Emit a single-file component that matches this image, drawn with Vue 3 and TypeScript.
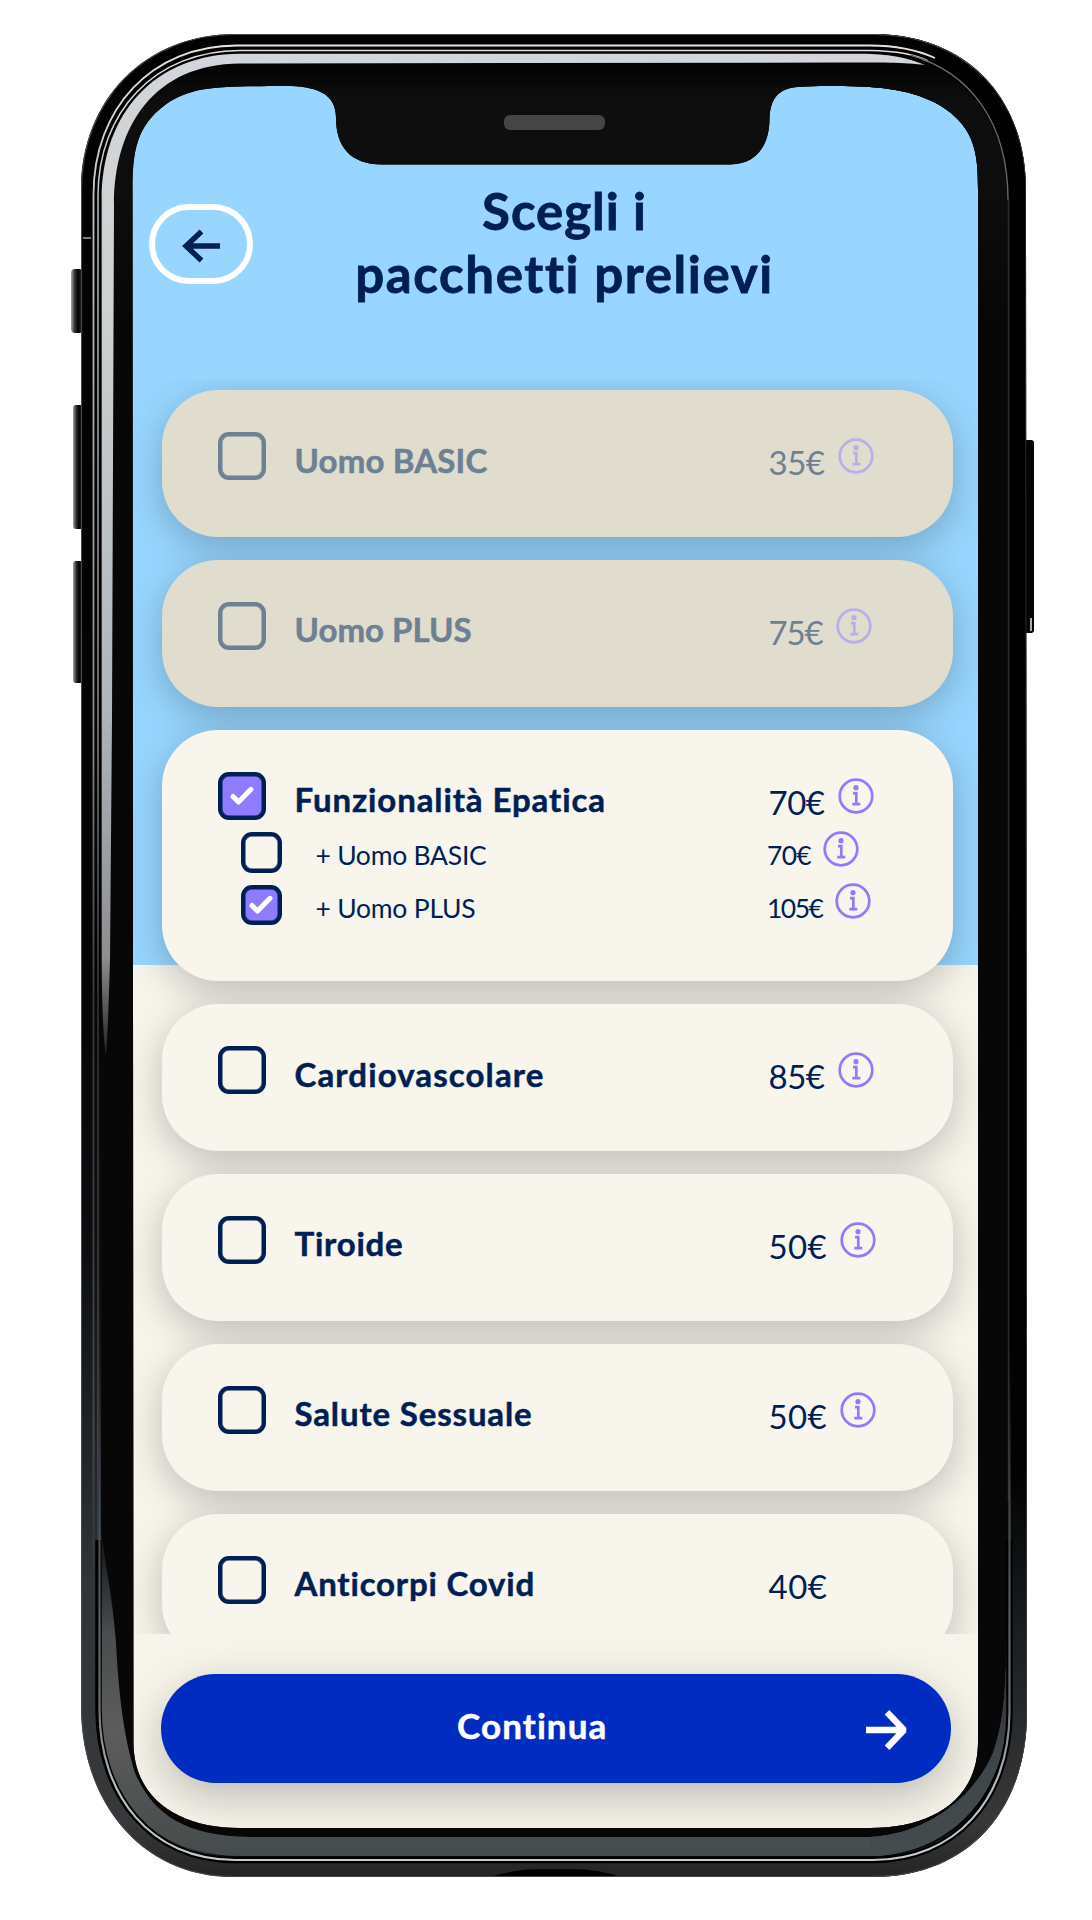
<script setup lang="ts">
import type { Directive } from 'vue'

interface Extra {
  label: string
  labelWidth: number
  price: string
  priceWidth: number
  checked: boolean
}

interface Pack extends Extra {
  disabled?: boolean
  info: boolean
  extras?: Extra[]
}

const packs: Pack[] = [
  { label: 'Uomo BASIC', labelWidth: 193, price: '35€', priceWidth: 56, checked: false, disabled: true, info: true },
  { label: 'Uomo PLUS', labelWidth: 177, price: '75€', priceWidth: 54, checked: false, disabled: true, info: true },
  {
    label: 'Funzionalità Epatica', labelWidth: 312, price: '70€', priceWidth: 56, checked: true, info: true,
    extras: [
      { label: '+ Uomo BASIC', labelWidth: 171, price: '70€', priceWidth: 44, checked: false },
      { label: '+ Uomo PLUS', labelWidth: 160, price: '105€', priceWidth: 55.5, checked: true },
    ],
  },
  { label: 'Cardiovascolare', labelWidth: 250, price: '85€', priceWidth: 56, checked: false, info: true },
  { label: 'Tiroide', labelWidth: 109, price: '50€', priceWidth: 58.5, checked: false, info: true },
  { label: 'Salute Sessuale', labelWidth: 238, price: '50€', priceWidth: 58.5, checked: false, info: true },
  { label: 'Anticorpi Covid', labelWidth: 241, price: '40€', priceWidth: 59, checked: false, info: false },
]

/* Spreads the letters of a text so that it takes the given width. */
const vFit: Directive<HTMLElement, number> = {
  mounted(el, { value }) {
    const count = (el.textContent ?? '').trim().length
    const natural = el.getBoundingClientRect().width
    el.style.letterSpacing = `${(value - natural) / count}px`
  },
}
</script>

<template>
  <div class="stage">
    <main class="screen">
      <header class="header">
        <button class="back" aria-label="Indietro">
          <svg width="40" height="36" viewBox="0 0 40 36" fill="none" stroke="#001f55" stroke-width="5.4">
            <path d="M39 18H5M20.5 3.500 5 18l15.500 14.500" stroke-linejoin="miter" />
          </svg>
        </button>
        <h1 class="title">
          <span v-fit="165">Scegli i</span>
          <span v-fit="417">pacchetti prelievi</span>
        </h1>
      </header>

      <section class="list">
        <article
          v-for="pack in packs"
          :key="pack.label"
          class="card"
          :class="{ disabled: pack.disabled, expanded: pack.extras }"
        >
          <div class="row">
            <span class="box" :class="{ checked: pack.checked }">
              <svg v-if="pack.checked" class="tick" width="24" height="19" viewBox="0 0 24 19">
                <path d="M3 10.500 8.500 16 21 3.300" />
              </svg>
            </span>
            <div class="name"><span v-fit="pack.labelWidth">{{ pack.label }}</span></div>
            <div class="price"><span v-fit="pack.priceWidth">{{ pack.price }}</span></div>
            <svg v-if="pack.info" class="info" width="36" height="36" viewBox="0 0 36 36">
              <circle cx="18" cy="18" r="16.300" />
              <circle class="dot" cx="18" cy="9.700" r="2.600" />
              <path d="M15 15.200h3.300v10.500M14.300 26.200h8" />
            </svg>
          </div>
          <div v-for="extra in pack.extras" :key="extra.label" class="row extra">
            <span class="box" :class="{ checked: extra.checked }">
              <svg v-if="extra.checked" class="tick" width="24" height="19" viewBox="0 0 24 19">
                <path d="M3 10.500 8.500 16 21 3.300" />
              </svg>
            </span>
            <div class="name"><span v-fit="extra.labelWidth">{{ extra.label }}</span></div>
            <div class="price"><span v-fit="extra.priceWidth">{{ extra.price }}</span></div>
            <svg class="info" width="36" height="36" viewBox="0 0 36 36">
              <circle cx="18" cy="18" r="16.300" />
              <circle class="dot" cx="18" cy="9.700" r="2.600" />
              <path d="M15 15.200h3.300v10.500M14.300 26.200h8" />
            </svg>
          </div>
        </article>
      </section>

      <footer class="footer">
        <button class="continue">
          <span class="cta"><span v-fit="151">Continua</span></span>
          <svg width="42" height="42" viewBox="0 0 42 42" fill="none" stroke="#fff" stroke-width="6.4">
            <path d="M0 21h37M21 3.300 38 21 21 38.700" stroke-linejoin="bevel" />
          </svg>
        </button>
      </footer>
    </main>

    <svg class="frame" width="1092" height="1920" viewBox="0 0 1092 1920" aria-hidden="true">
      <defs>
        <linearGradient id="body" x1="0" y1="34" x2="0" y2="1877" gradientUnits="userSpaceOnUse">
          <stop offset="0" stop-color="#020202" />
          <stop offset=".5" stop-color="#040405" />
          <stop offset=".66" stop-color="#0c0d0e" />
          <stop offset=".84" stop-color="#303438" />
          <stop offset=".97" stop-color="#36383a" />
          <stop offset="1" stop-color="#242424" />
        </linearGradient>
        <linearGradient id="rightBody" x1="0" y1="34" x2="0" y2="1877" gradientUnits="userSpaceOnUse">
          <stop offset="0" stop-color="#000" />
          <stop offset=".78" stop-color="#020202" />
          <stop offset=".87" stop-color="#1c1e20" />
          <stop offset=".97" stop-color="#36383a" />
          <stop offset="1" stop-color="#242424" />
        </linearGradient>
        <linearGradient id="silver" x1="0" y1="54" x2="0" y2="1056" gradientUnits="userSpaceOnUse">
          <stop offset="0" stop-color="#d2d6da" />
          <stop offset=".25" stop-color="#ced1d1" />
          <stop offset=".65" stop-color="#b0b5ba" />
          <stop offset=".9" stop-color="#8d8f91" />
          <stop offset="1" stop-color="#222" />
        </linearGradient>
        <linearGradient id="line" x1="0" y1="44" x2="0" y2="1600" gradientUnits="userSpaceOnUse">
          <stop offset="0" stop-color="#e6e2e2" />
          <stop offset=".12" stop-color="#bdbdbd" />
          <stop offset=".45" stop-color="#8a8583" />
          <stop offset=".62" stop-color="#34373b" />
          <stop offset=".9" stop-color="#44494e" />
          <stop offset="1" stop-color="#44494e" stop-opacity="0" />
        </linearGradient>
        <linearGradient id="lower" x1="0" y1="1540" x2="0" y2="1858" gradientUnits="userSpaceOnUse">
          <stop offset="0" stop-color="#15181a" />
          <stop offset=".3" stop-color="#4b4d4e" />
          <stop offset=".6" stop-color="#5c5c5b" />
          <stop offset="1" stop-color="#454b4c" />
        </linearGradient>
        <linearGradient id="lowerRight" x1="0" y1="1600" x2="0" y2="1858" gradientUnits="userSpaceOnUse">
          <stop offset="0" stop-color="#1c2024" />
          <stop offset=".6" stop-color="#3e454a" />
          <stop offset="1" stop-color="#454c4e" />
        </linearGradient>
        <linearGradient id="rim" x1="0" y1="1350" x2="0" y2="1860" gradientUnits="userSpaceOnUse">
          <stop offset="0" stop-color="#34393e" stop-opacity="0" />
          <stop offset=".3" stop-color="#40464b" />
          <stop offset=".7" stop-color="#6c7276" />
          <stop offset=".85" stop-color="#b5b8ba" />
          <stop offset="1" stop-color="#c5cacb" />
        </linearGradient>
        <linearGradient id="bezel" x1="0" y1="64" x2="0" y2="320" gradientUnits="userSpaceOnUse">
          <stop offset="0" stop-color="#030303" />
          <stop offset=".15" stop-color="#0e0e0e" />
          <stop offset=".5" stop-color="#0d0d0d" />
          <stop offset="1" stop-color="#070707" />
        </linearGradient>
        <linearGradient id="key" x1="0" y1="0" x2="1" y2="0">
          <stop offset="0" stop-color="#a7aaad" />
          <stop offset=".3" stop-color="#34373a" />
          <stop offset=".6" stop-color="#000" />
          <stop offset="1" stop-color="#34373a" />
        </linearGradient>
        <clipPath id="glass">
          <path clip-rule="evenodd" d="M81 190C81 100 145 34 235 34H873C965 34 1026 96 1026 190L1027 1713C1027 1808 970 1877 873 1877H233C140 1877 81 1800 81 1707ZM132.500 190C132.500 150 137 126 165 105C192 85 222 86.500 285 86C316 86 336 93 336 118C336 146 350 164.500 382 164.500H730C756 164.500 769 146 769.500 120C770 97 779 87 804 86.500C870 85 908 87 941 106C976 128 978 155 978 190V1742C978 1800 932 1828 870 1828H240C180 1828 133.500 1800 133.500 1742Z" />
        </clipPath>
      </defs>

      <g>
        <rect x="71" y="269" width="12" height="64" rx="4" fill="url(#key)" />
        <rect x="73" y="405" width="10" height="124" rx="3" fill="url(#key)" />
        <rect x="73" y="561" width="10" height="122" rx="3" fill="url(#key)" />
        <rect x="1024" y="440" width="10" height="193" rx="3" fill="#050505" />
        <path d="M1031 618v13" stroke="#aaa" stroke-width="2" />
      </g>

      <g clip-path="url(#glass)">
        <rect x="60" y="20" width="980" height="1870" fill="url(#body)" />
        <rect x="800" y="20" width="240" height="1870" fill="url(#rightBody)" />
        <path d="M101 1000V200C101 113 155 53 240 53H870C950 53 1008 110 1008 200V1713C1008 1800 950 1857 870 1857H240C155 1857 101 1790 101 1707Z" fill="url(#bezel)" />

        <g fill="none" stroke="url(#line)">
          <path d="M93.500 1600V195C93.500 108 152 45.500 237 45.500H870C895 45.500 915 49 935 58" stroke-width="1.800" />
          <path d="M98 1600V196C98 112 155 50.500 240 50.500H870C895 51 915 54 928 61" stroke-width="1.500" />
        </g>
        <path d="M101.700 960V200C101.700 113 155 54 240 53.700H860C890 54 905 57 925 65C905 62.500 880 62.500 840 62.500L240 63.500C155 64 114 125 114 205L112 720L110 960Q108 1030 106 1056Q102 1030 101.700 960Z" fill="url(#silver)" />
        <path d="M910 55C970 72 1008 122 1008 200" fill="none" stroke="#66666a" stroke-width="1.400" />
        <path d="M1008.500 200V1500" fill="none" stroke="#2c2d31" stroke-width="1.600" />

        <path d="M101 1530C106 1570 115 1610 117 1660C121 1720 128 1750 135 1773C152 1812 182 1836 250 1837H870C930 1834 975 1795 993 1753C1003 1725 1005 1700 1007 1640V1720C1001 1806 940 1856 870 1856H240C145 1856 101 1790 101 1707Z" fill="url(#lower)" />
        <path d="M870 1837C930 1834 975 1795 993 1753C1003 1725 1005 1700 1007 1640V1720C1001 1806 940 1856 870 1856Z" fill="url(#lowerRight)" />
        <path d="M98.500 1540V1710C99 1795 150 1860 235 1860H873C955 1860 1009 1800 1009.500 1713V1540" fill="none" stroke="#000" stroke-width="6.500" />
        <path d="M99.500 1350V1710C99.500 1795 150 1860 235 1860H873C955 1860 1009 1800 1009.500 1713V1350" fill="none" stroke="url(#rim)" stroke-width="2.200" />
        <path d="M490 1877Q515 1869 540 1869H570Q600 1869 620 1877Z" fill="#000" />
        <path d="M83 238h8" stroke="#a5a5a5" stroke-width="1.500" />
        <path d="M81.500 1707V190C81.500 100 145 34.500 235 34.500H873C965 34.500 1026 96 1026 190L1027 1713C1027 1808 970 1876.500 873 1876.500H233C140 1876.500 81.500 1800 81.500 1707Z" fill="none" stroke="#45474a" stroke-width="1.200" />
      </g>
      <rect x="504" y="115" width="101" height="15" rx="6" fill="#454544" />
    </svg>
  </div>
</template>

<style>
body {
  margin: 0;
  background: #fff;
}
</style>

<style scoped>
.stage {
  position: relative;
  box-sizing: border-box;
  width: 1092px;
  height: 1920px;
  padding: 86px 114px 0 132px;
  overflow: hidden;
  background: #fff;
  color: #001f55;
  font-family: Lato, 'Open Sans', sans-serif;
}

.frame {
  position: absolute;
  inset: 0;
  pointer-events: none;
}

.screen {
  display: flex;
  flex-direction: column;
  width: 846px;
  height: 1742px;
  background: linear-gradient(#98d6ff 0 879px, #f7f4eb 879px);
}

.header {
  display: flex;
  flex: none;
  align-items: flex-start;
  box-sizing: border-box;
  height: 293px;
  padding: 93px 0 0 17px;
}

.back {
  display: flex;
  flex: none;
  align-items: center;
  justify-content: center;
  box-sizing: border-box;
  width: 104px;
  height: 80px;
  margin-top: 25px;
  padding: 4px 0 0;
  border: 6px solid #fff;
  border-radius: 40px;
  background: none;
}

.title {
  display: flex;
  flex-direction: column;
  align-items: center;
  width: 623px;
  margin: 0;
  font-size: 51px;
  font-weight: 700;
  line-height: 63px;
  white-space: nowrap;
  -webkit-text-stroke: 0.8px currentColor;
}

.list {
  display: flex;
  flex: none;
  flex-direction: column;
  gap: 23px;
  box-sizing: border-box;
  height: 1255px;
  padding: 11px 25px 0 30px;
  overflow: hidden;
}

.card {
  flex: none;
  box-sizing: border-box;
  height: 146.800px;
  padding: 42px 56px 0;
  border-radius: 56px;
  background: #f8f5ec;
  box-shadow: 0 10px 38px rgba(0, 0, 0, 0.23);
}

.card.expanded {
  height: 251.600px;
}

.card.disabled {
  background: #e1ddce;
  color: #6d8094;
}

.row {
  display: flex;
  align-items: flex-start;
  height: 60.500px;
  white-space: nowrap;
}

.box {
  display: flex;
  flex: none;
  align-items: center;
  justify-content: center;
  box-sizing: border-box;
  width: 48px;
  height: 48px;
  border: 4.500px solid #001f55;
  border-width: 4.500px;
  border-radius: 11px;
  box-shadow: inset 0 0 0 0.500px #001f55;
}

.disabled .box {
  border-color: #6d8094;
  box-shadow: inset 0 0 0 0.500px #6d8094;
}

.box.checked {
  background: #8f7bff;
}

.tick {
  fill: none;
  stroke: #fff;
  stroke-width: 5;
  stroke-linecap: round;
  stroke-linejoin: round;
}

.name {
  width: 474px;
  margin: 7.500px 0 0 28.500px;
  font-size: 33px;
  font-weight: 700;
  line-height: 40px;
  -webkit-text-stroke: 0.500px currentColor;
}

.price {
  margin-top: 10px;
  font-size: 33px;
  line-height: 40px;
}

.info {
  flex: none;
  margin: 6px 0 0 13px;
  fill: none;
  stroke: #8f7bff;
  stroke-width: 2.700;
}

.info .dot {
  fill: #8f7bff;
  stroke: none;
}

.disabled .info {
  stroke: #b9aeeb;
}

.disabled .info .dot {
  fill: #b9aeeb;
}

.extra {
  height: 52.500px;
  padding-left: 23px;
}

.extra .box {
  width: 40.500px;
  height: 40.500px;
}

.extra .name {
  width: 451.500px;
  margin: 8px 0 0 34px;
  font-size: 26.500px;
  font-weight: 400;
  line-height: 30px;
  -webkit-text-stroke: 0;
}

.extra .price {
  margin-top: 8px;
  font-size: 26.500px;
  line-height: 30px;
}

.extra .info {
  margin: -1.500px 0 0 12px;
}

.footer {
  flex: 1;
  padding: 40px 27px 0 28.500px;
  background: #f7f4eb;
}

.continue {
  display: flex;
  align-items: center;
  box-sizing: border-box;
  width: 790.500px;
  height: 109px;
  padding: 0 43px 0 0;
  border: 0;
  border-radius: 55px;
  background: #002cc2;
  box-shadow: 0 14px 46px rgba(0, 0, 0, 0.24);
  color: #fff;
  font-family: inherit;
  font-size: 35px;
  font-weight: 700;
  line-height: 44px;
  -webkit-text-stroke: 0.500px currentColor;
}

.cta {
  flex: 1;
  padding: 0 0 8px 38px;
  text-align: center;
}

.continue svg {
  margin-top: 3px;
}
</style>
